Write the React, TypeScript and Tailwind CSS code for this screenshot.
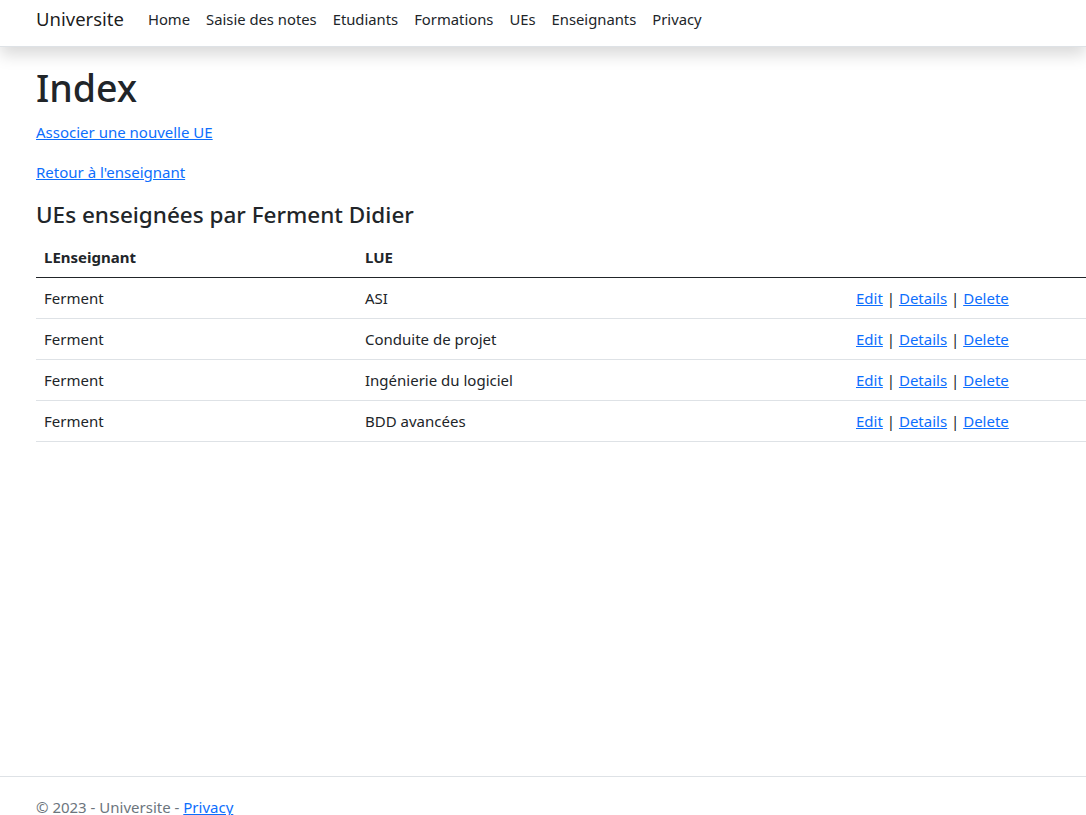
import React from "react";

const navLinks = ["Home", "Saisie des notes", "Etudiants", "Formations", "UEs", "Enseignants", "Privacy"];

const rows = [
  { ens: "Ferment", ue: "ASI" },
  { ens: "Ferment", ue: "Conduite de projet" },
  { ens: "Ferment", ue: "Ingénierie du logiciel" },
  { ens: "Ferment", ue: "BDD avancées" },
];

export default function App() {
  return (
    <div
      className="w-[1086px] h-[837px] overflow-hidden flex flex-col bg-white text-[#212529] text-[15px] leading-6"
      style={{ fontFamily: '"Noto Sans", "Open Sans", sans-serif' }}
    >
      {/* Navbar */}
      <header className="h-[47px] shrink-0 border-b border-[#dee2e6] shadow-[0_8px_16px_rgba(0,0,0,0.15)] bg-white relative z-10">
        <div className="h-[46px] flex items-start pt-[7px] pl-9">
          <a className="text-[18.5px] leading-6 text-black/90 mr-4 cursor-pointer">Universite</a>
          <ul className="flex items-center">
            {navLinks.map((l) => (
              <li key={l}>
                <a className="px-2 text-[14.8px] leading-6 text-[#212529] cursor-pointer">{l}</a>
              </li>
            ))}
          </ul>
        </div>
      </header>

      {/* Main */}
      <main className="flex-1 pt-[17px] pl-9 w-[1152px]">
        <h1 className="text-[37.5px] leading-[48px] font-medium mb-2">Index</h1>
        <p className="mb-4">
          <a className="text-[#0d6efd] underline cursor-pointer">Associer une nouvelle UE</a>
        </p>
        <p className="mb-4">
          <a className="text-[#0d6efd] underline cursor-pointer">Retour à l'enseignant</a>
        </p>
        <h4 className="text-[22.5px] leading-[29px] font-medium mb-2">UEs enseignées par Ferment Didier</h4>

        <table className="w-[1116px] table-fixed border-collapse">
          <colgroup>
            <col className="w-[321px]" />
            <col className="w-[491px]" />
            <col className="w-[304px]" />
          </colgroup>
          <thead>
            <tr className="border-b border-[#212529]">
              <th className="text-left font-bold px-2 py-2">LEnseignant</th>
              <th className="text-left font-bold px-2 py-2">LUE</th>
              <th className="px-2 py-2"></th>
            </tr>
          </thead>
          <tbody>
            {rows.map((r) => (
              <tr key={r.ue} className="border-b border-[#dee2e6]">
                <td className="px-2 py-2">{r.ens}</td>
                <td className="px-2 py-2">{r.ue}</td>
                <td className="px-2 py-2">
                  <a className="text-[#0d6efd] underline cursor-pointer">Edit</a> |{" "}
                  <a className="text-[#0d6efd] underline cursor-pointer">Details</a> |{" "}
                  <a className="text-[#0d6efd] underline cursor-pointer">Delete</a>
                </td>
              </tr>
            ))}
          </tbody>
        </table>
      </main>

      {/* Footer */}
      <footer className="shrink-0 border-t border-[#dee2e6] h-[61px] leading-[60px] pl-9 text-[#6c757d] whitespace-nowrap">
        © 2023 - Universite - <a className="text-[#0d6efd] underline cursor-pointer">Privacy</a>
      </footer>
    </div>
  );
}
